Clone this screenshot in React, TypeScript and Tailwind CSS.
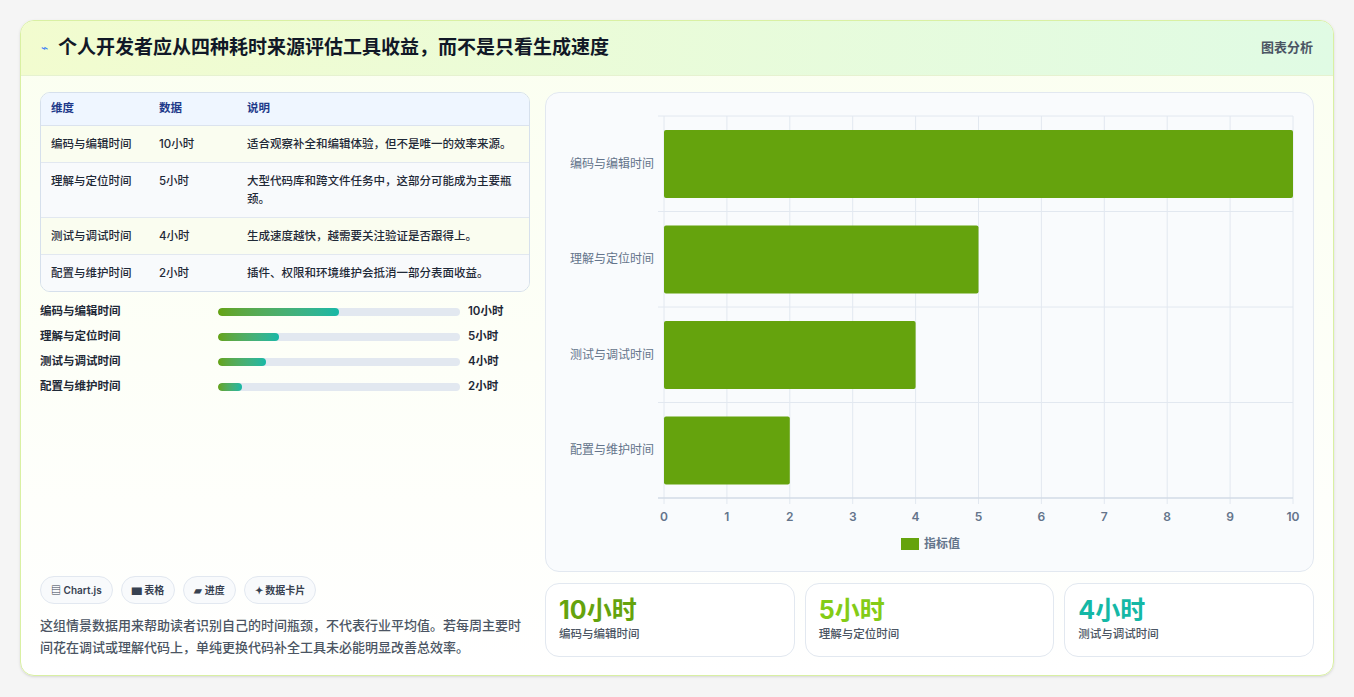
import React from "react";

const rows = [
  { k: "编码与编辑时间", v: "10小时", d: "适合观察补全和编辑体验，但不是唯一的效率来源。", n: 10 },
  { k: "理解与定位时间", v: "5小时", d: "大型代码库和跨文件任务中，这部分可能成为主要瓶颈。", n: 5 },
  { k: "测试与调试时间", v: "4小时", d: "生成速度越快，越需要关注验证是否跟得上。", n: 4 },
  { k: "配置与维护时间", v: "2小时", d: "插件、权限和环境维护会抵消一部分表面收益。", n: 2 },
];

function Chart() {
  const x0 = 118, x1 = 747, y0 = 23, y1 = 405;
  const w = (x1 - x0) / 10;
  const band = (y1 - y0) / 4;
  return (
    <svg width="767" height="478" className="block">
      {Array.from({ length: 11 }).map((_, i) => (
        <g key={i}>
          <line x1={x0 + i * w} x2={x0 + i * w} y1={y0} y2={y1 + 6} stroke="#e2e8f0" />
          <text x={x0 + i * w} y={428} textAnchor="middle" fontSize="12" fontWeight="600" fill="#64748b" fontFamily="Inter, sans-serif">{i}</text>
        </g>
      ))}
      {[0, 1, 2, 3, 4].map((j) => (
        <line key={j} x1={x0 - 6} x2={x1} y1={y0 + j * band} y2={y0 + j * band} stroke="#e2e8f0" />
      ))}
      <line x1={x0 - 6} x2={x1} y1={y1} y2={y1} stroke="#cbd5e1" />
      {rows.map((r, j) => (
        <g key={j}>
          <rect x={x0} y={y0 + j * band + 14} width={r.n * w} height={68} rx="2" fill="#65a30d" />
          <text x={x0 - 10} y={y0 + j * band + band / 2 + 4} textAnchor="end" fontSize="12" fill="#64748b" fontFamily="'Noto Sans CJK SC', sans-serif">{r.k}</text>
        </g>
      ))}
      <rect x={355} y={445} width={18} height={12} fill="#65a30d" />
      <text x={378} y={455} fontSize="12" fontWeight="600" fill="#64748b" fontFamily="'Noto Sans CJK SC', sans-serif">指标值</text>
    </svg>
  );
}

export default function App() {
  return (
    <div className="w-[1354px] h-[697px] bg-[#f5f5f5] pt-[20px] pl-[20px]" style={{ fontFamily: "Inter, 'Noto Sans CJK SC', sans-serif" }}>
      <div className="w-[1314px] h-[656px] rounded-[14px] border border-[#d9f0a3] bg-gradient-to-b from-[#fbfff0] to-white overflow-hidden shadow-sm flex flex-col">
        <div className="h-[55px] flex items-center justify-between px-[20px] bg-gradient-to-r from-[#f2fccf] to-[#e0fbe4] border-b border-[#e6f2d0]">
          <div className="flex items-center gap-[10px]">
            <span className="text-[#3b82f6] text-[12px]">⌁</span>
            <span className="text-[19px] font-bold text-[#111827]">个人开发者应从四种耗时来源评估工具收益，而不是只看生成速度</span>
          </div>
          <span className="text-[13px] font-semibold text-[#4b5563]">图表分析</span>
        </div>
        <div className="flex gap-[15px] px-[19px] pt-[16px]">
          <div className="w-[491px] h-[566px] flex flex-col">
            <div className="rounded-[10px] border border-[#d6e0ec] overflow-hidden text-[11.5px] font-medium text-[#1f2937]">
              <div className="h-[33px] flex items-center bg-[#eff6ff] border-b border-[#dbe3ee] text-[#1e3a8a] font-semibold">
                <div className="w-[118px] pl-[10px]">维度</div>
                <div className="w-[88px]">数据</div>
                <div>说明</div>
              </div>
              {rows.map((r, i) => (
                <div key={i} className={`flex items-start py-[9px] leading-[18px] ${i < 3 ? "border-b border-[#e2e8f0]" : ""} ${i % 2 === 0 ? "bg-[#fafdf0]" : "bg-[#f8fafc]"}`}>
                  <div className="w-[118px] pl-[10px] shrink-0">{r.k}</div>
                  <div className="w-[88px] shrink-0">{r.v}</div>
                  <div className="pr-[10px]">{r.d}</div>
                </div>
              ))}
            </div>
            <div className="mt-[12px] flex flex-col gap-[9px]">
              {rows.map((r, i) => (
                <div key={i} className="flex items-center h-[16px] text-[11.5px] font-semibold text-[#1f2937]">
                  <div className="w-[178px]">{r.k}</div>
                  <div className="w-[242px] h-[8px] rounded-full bg-[#e2e8f0] overflow-hidden">
                    <div className="h-full rounded-full bg-gradient-to-r from-[#65a30d] to-[#14b8a6]" style={{ width: `${r.n * 5}%` }} />
                  </div>
                  <div className="ml-[8px]">{r.v}</div>
                </div>
              ))}
            </div>
            <div className="mt-auto">
              <div className="flex gap-[8px] text-[10px] font-semibold text-[#374151]">
                <span className="h-[28px] px-[10px] flex items-center rounded-full border border-[#e2e8f0] bg-[#f8fafc]">▤ Chart.js</span>
                <span className="h-[28px] px-[10px] flex items-center rounded-full border border-[#e2e8f0] bg-[#f8fafc]">▆ 表格</span>
                <span className="h-[28px] px-[10px] flex items-center rounded-full border border-[#e2e8f0] bg-[#f8fafc]">▰ 进度</span>
                <span className="h-[28px] px-[10px] flex items-center rounded-full border border-[#e2e8f0] bg-[#f8fafc]">✦ 数据卡片</span>
              </div>
              <p className="mt-[10px] text-[13px] leading-[22px] text-[#4b5563] font-medium">这组情景数据用来帮助读者识别自己的时间瓶颈，不代表行业平均值。若每周主要时间花在调试或理解代码上，单纯更换代码补全工具未必能明显改善总效率。</p>
            </div>
          </div>
          <div className="w-[769px] flex flex-col gap-[11px]">
            <div className="h-[480px] rounded-[14px] border border-[#e2e8f0] bg-[#f9fbfd]">
              <Chart />
            </div>
            <div className="flex gap-[10px]">
              {[["10小时", "text-[#65a30d]"], ["5小时", "text-[#84cc16]"], ["4小时", "text-[#14b8a6]"]].map(([v, c], i) => (
                <div key={i} className="flex-1 h-[74px] rounded-[14px] border border-[#e2e8f0] bg-white px-[13px] pt-[10px]">
                  <div className={`text-[25px] font-bold leading-[32px] ${c}`}>{v}</div>
                  <div className="text-[11.5px] text-[#4b5563] font-medium">{rows[i].k}</div>
                </div>
              ))}
            </div>
          </div>
        </div>
      </div>
    </div>
  );
}
